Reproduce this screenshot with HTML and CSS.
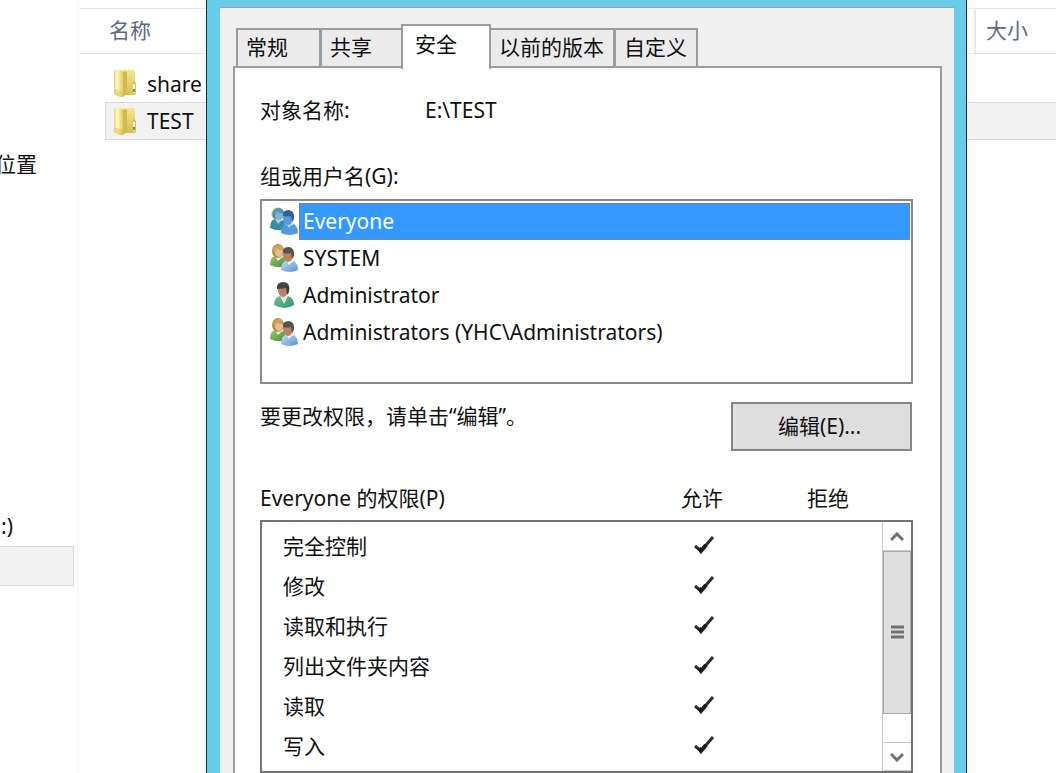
FILE: index.html
```html
<!DOCTYPE html>
<html lang="zh-CN">
<head>
<meta charset="utf-8">
<title>TEST 属性</title>
<link rel="stylesheet" href="styles.css">
</head>
<body>
<svg class="defs" aria-hidden="true">
  <defs>
    <linearGradient id="gold" x1="0" x2="1"><stop offset="0" stop-color="#e8d77a"/><stop offset=".35" stop-color="#fff9c4"/><stop offset="1" stop-color="#e3cd62"/></linearGradient>
    <linearGradient id="gold-back" x1="0" x2="0" y1="0" y2="1"><stop offset="0" stop-color="#f3e791"/><stop offset="1" stop-color="#d9bd48"/></linearGradient>
    <linearGradient id="green" x2="1" y2="1"><stop offset="0" stop-color="#9cc77c"/><stop offset="1" stop-color="#4c8a35"/></linearGradient>
    <linearGradient id="blue" x2="1" y2="1"><stop offset="0" stop-color="#c0dcf5"/><stop offset="1" stop-color="#5a92cc"/></linearGradient>
    <linearGradient id="teal" x2="1" y2="1"><stop offset="0" stop-color="#7cc0a0"/><stop offset="1" stop-color="#2f9468"/></linearGradient>
    <symbol id="folder" viewBox="0 0 24 29">
      <path d="M4 1h16q2 0 2 2v21q0 2-2 2H8z" fill="url(#gold-back)"/>
      <path d="M20 12q3 0 3 3v9q0 2-3 2z" fill="#dcc252"/>
      <path d="M20 15h2v9h-2z" fill="#f5f1dc"/><path d="M20 20h2v3h-2z" fill="#3fa69a"/>
      <path d="M8 5q3-4 6-2v20q-2 5-6 5z" fill="#d3b94f"/>
      <path d="M1 3q0-2 2-2h5q2 1 2 4v20q0 3-3 3l-5-2q-1-1-1-2z" fill="url(#gold)"/>
      <path d="M1 20l9 3v3q0 2-3 2l-5-2q-1-1-1-2z" fill="#d9bf50" opacity=".5"/>
    </symbol>
    <symbol id="group" viewBox="0 0 28 28">
      <path d="M0 21q0-8 5-9l5 2 4-1 2 9q-8 3-16-1z" fill="url(#green)"/>
      <path d="M5 12l3 5 4-4z" fill="#f3eee0"/>
      <ellipse cx="8" cy="7" rx="6" ry="7" fill="#b68d42"/><ellipse cx="9" cy="8" rx="4" ry="5" fill="#e8bb92"/><path d="M3 7q0-6 6-6 4 0 5 5-5 1-7-2 0 4-4 3z" fill="#cda35a"/>
      <path d="M11 26q0-8 5-9l4 2 4-2q4 3 4 9-8 4-17 0z" fill="url(#blue)"/>
      <path d="M16 16l3 5 4-5z" fill="#eef5fb"/>
      <ellipse cx="18" cy="11" rx="5" ry="7" fill="#b98260"/><path d="M13 9q-1-6 6-6 6 1 5 9l-2 3-1-6q-4 1-8 0z" fill="#55544e"/>
    </symbol>
    <symbol id="group-selected" viewBox="0 0 28 28">
      <path d="M0 21q0-8 5-9l5 2 4-1 2 9q-8 3-16-1z" fill="#368da2"/>
      <ellipse cx="8" cy="7" rx="6" ry="6" fill="#4b86a5" stroke="#8fcb55"/><ellipse cx="9" cy="8" rx="4" ry="5" fill="#7fb2dc"/><path d="M3 7q0-6 6-6 4 0 5 5-5 1-7-2 0 4-4 3z" fill="#5c93b0"/>
      <path d="M11 26q0-8 5-9l4 2 4-2q4 3 4 9-8 4-17 0z" fill="#529be2"/>
      <path d="M5 12l3 5 4-4zM16 16l3 5 4-5z" fill="#a4d4f6"/>
      <ellipse cx="18" cy="11" rx="5" ry="7" fill="#5b9ad6"/><path d="M13 9q-1-6 6-6 6 1 5 9l-2 3-1-6q-4 1-8 0z" fill="#2d6297"/>
    </symbol>
    <symbol id="user" viewBox="0 0 28 28">
      <path d="M4 24q0-8 6-9l4 2 4-2q6 2 6 9-9 6-20 0z" fill="url(#teal)"/>
      <path d="M10 15l4 8 4-8z" fill="#d9eee4"/>
      <ellipse cx="13" cy="9" rx="5" ry="7" fill="#b98466"/><path d="M7 8q-1-7 7-7 7 1 5 10l-2 3-1-7q-4 1-9 1z" fill="#45423d"/>
    </symbol>
    <symbol id="check" viewBox="0 0 22 20"><path d="M2 11l6 5L20 2" fill="none" stroke="#2b2b2b" stroke-width="3"/><path d="M6 13l2 3 5-6" fill="none" stroke="#1d1d1d" stroke-width="4"/></symbol>
  </defs>
</svg>

<div class="explorer">
  <nav class="sidebar">
    <a class="nav-place" href="#">位置</a>
    <a class="nav-drive" href="#">:)</a>
    <div class="nav-selected"></div>
  </nav>
  <main class="files">
    <div class="columns"><span class="col-name">名称</span><span class="col-size">大小</span></div>
    <div class="file"><svg class="folder"><use href="#folder"/></svg><span>share</span></div>
    <div class="file file-selected"><svg class="folder"><use href="#folder"/></svg><span>TEST</span></div>
  </main>
</div>

<section class="dialog" role="dialog" aria-label="TEST 属性">
  <div class="dialog-body">
    <div class="tabs" role="tablist">
      <button class="tab tab-general" role="tab">常规</button>
      <button class="tab tab-share" role="tab">共享</button>
      <button class="tab tab-active" role="tab" aria-selected="true">安全</button>
      <button class="tab tab-versions" role="tab">以前的版本</button>
      <button class="tab tab-custom" role="tab">自定义</button>
    </div>
    <div class="panel" role="tabpanel">
      <div class="object"><span class="object-label">对象名称:</span><span>E:\TEST</span></div>
      <div class="group-label" id="group-label">组或用户名(G):</div>
      <ul class="principals" role="listbox" aria-labelledby="group-label">
        <li class="principal selected" role="option" aria-selected="true"><svg class="person"><use href="#group-selected"/></svg><span class="principal-name">Everyone</span></li>
        <li class="principal" role="option"><svg class="person"><use href="#group"/></svg><span class="principal-name">SYSTEM</span></li>
        <li class="principal" role="option"><svg class="person"><use href="#user"/></svg><span class="principal-name">Administrator</span></li>
        <li class="principal" role="option"><svg class="person"><use href="#group"/></svg><span class="principal-name">Administrators (YHC\Administrators)</span></li>
      </ul>
      <div class="edit-row"><span>要更改权限，请单击“编辑”。</span><button class="edit">编辑(E)...</button></div>
      <div class="perm-head"><span class="perm-title" id="perm-title">Everyone 的权限(P)</span><span class="perm-col">允许</span><span class="perm-col">拒绝</span></div>
      <div class="perm-box">
        <table class="perms" aria-labelledby="perm-title">
          <tbody>
            <tr><th scope="row">完全控制</th><td><svg class="check" role="img" aria-label="允许"><use href="#check"/></svg></td><td></td></tr>
            <tr><th scope="row">修改</th><td><svg class="check" role="img" aria-label="允许"><use href="#check"/></svg></td><td></td></tr>
            <tr><th scope="row">读取和执行</th><td><svg class="check" role="img" aria-label="允许"><use href="#check"/></svg></td><td></td></tr>
            <tr><th scope="row">列出文件夹内容</th><td><svg class="check" role="img" aria-label="允许"><use href="#check"/></svg></td><td></td></tr>
            <tr><th scope="row">读取</th><td><svg class="check" role="img" aria-label="允许"><use href="#check"/></svg></td><td></td></tr>
            <tr><th scope="row">写入</th><td><svg class="check" role="img" aria-label="允许"><use href="#check"/></svg></td><td></td></tr>
          </tbody>
        </table>
        <div class="scrollbar">
          <button class="arrow" aria-label="向上滚动"><svg class="chevron" viewBox="0 0 14 10"><path d="M1 8l6-6 6 6"/></svg></button>
          <div class="thumb"><svg class="grip" viewBox="0 0 13 15"><path d="M0 2h13M0 7h13M0 12h13"/></svg></div>
          <div class="track"></div>
          <button class="arrow arrow-down" aria-label="向下滚动"><svg class="chevron" viewBox="0 0 14 10"><path d="M1 2l6 6 6-6"/></svg></button>
        </div>
      </div>
    </div>
  </div>
</section>
</body>
</html>
```
FILE: styles.css
```css
* { box-sizing: border-box; }

body {
  margin: 0;
  height: 100vh;
  position: relative;
  overflow: hidden;
  background: #fff;
  color: #111;
  font: 21px/28px "Noto Sans", "Noto Sans CJK SC", sans-serif;
}

button { font: inherit; color: inherit; border-radius: 0; }
a { color: inherit; text-decoration: none; }
.defs { position: absolute; width: 0; height: 0; }

.explorer { display: flex; min-height: 100vh; }

.sidebar {
  width: 78px;
  flex: none;
  display: flex;
  flex-direction: column;
  padding-top: 150px;
  border-right: 1px solid #f6f6f6;
}
.nav-place { margin-left: -5px; }
.nav-drive { margin-top: 334px; margin-left: 1px; }
.nav-selected {
  height: 40px;
  margin: 6px 3px 0 0;
  background: #f2f2f2;
  border: 1px solid #dcdcdc;
  border-left: 0;
}

.files { flex: 1; padding: 8px 0 0 2px; }
.columns {
  display: flex;
  justify-content: space-between;
  height: 46px;
  margin-bottom: 11px;
  border: solid #e4e4e4;
  border-width: 1px 0;
  color: #5c6b80;
  line-height: 42px;
}
.col-name { padding-left: 29px; }
.col-size { width: 82px; padding-left: 10px; border-left: 2px solid #e8e8e8; }

.file {
  display: flex;
  align-items: center;
  gap: 10px;
  height: 37px;
  margin-left: 25px;
  padding-left: 8px;
}
.file-selected { height: 38px; padding-left: 7px; background: #f2f2f2; border: 1px solid #dadada; border-right: 0; }
.folder { width: 24px; height: 29px; }

.dialog {
  position: absolute;
  top: 0;
  bottom: 0;
  left: 206px;
  right: 89px;
  overflow: hidden;
  padding: 7px 12px 0 13px;
  background: #67cbe9;
  border: solid #18323c;
  border-width: 0 1px;
}
.dialog-body { padding: 16px 12px 0 13px; min-height: 100%; background: #f0f0f0; border-top: 1px solid #8fa5ad; }

.tabs { display: flex; align-items: flex-end; height: 45px; padding-left: 3px; margin-bottom: -3px; position: relative; }
.tab {
  height: 40px;
  margin-bottom: 1px;
  padding: 0 0 2px 8px;
  text-align: left;
  background: #ebebeb;
  border: 2px solid #999da0;
  border-right-width: 1px;
}
.tab-general { width: 84px; }
.tab-share { width: 81px; border-right: 0; }
.tab-active { width: 90px; height: 45px; margin: 0; padding: 0 0 7px 12px; background: #fff; border-bottom: 0; border-right-width: 2px; }
.tab-versions { width: 123px; border-left: 0; }
.tab-custom { width: 84px; border-right-width: 2px; }

.panel { padding: 28px 27px 20px 25px; background: #fff; border: 2px solid #999da0; border-bottom: 0; }
.object { display: flex; }
.object-label { width: 165px; }
.group-label { margin-top: 38px; }

.principals { list-style: none; min-height: 185px; margin: 9px 0 0; padding: 2px 1px 2px 8px; border: 2px solid #858b8e; }
.principal { display: flex; align-items: center; height: 37px; }
.person { width: 28px; height: 28px; flex: none; margin-bottom: 2px; }
.principal-name { flex: 1; margin-left: 1px; padding-left: 4px; line-height: 37px; }
.selected .principal-name { color: #fff; background: #3399ff; outline: 1px dotted #a0794a; outline-offset: -1px; }

.edit-row { display: flex; justify-content: space-between; margin-top: 18px; }
.edit { width: 181px; height: 49px; margin-right: 1px; padding: 0 4px 2px 0; background: #dedede; border: 2px solid #858585; }

.perm-head { display: flex; margin-top: 33px; padding-right: 22px; }
.perm-title { flex: 1; }
.perm-col { width: 126px; text-align: center; }
.perm-box { display: flex; height: 253px; margin-top: 8px; border: 2px solid #737373; }
.perms { flex: 1; align-self: flex-start; margin-top: 4px; border-collapse: collapse; table-layout: fixed; }
.perms th { padding: 0 0 0 21px; text-align: left; font-weight: normal; }
.perms td { width: 119px; padding: 0; text-align: center; }
.perms tr { height: 40px; }
.check { width: 22px; height: 20px; display: block; margin: 0 auto 2px; }

.scrollbar { width: 29px; display: flex; flex-direction: column; border-left: 1px solid #c8c8c8; }
.arrow { display: flex; align-items: center; justify-content: center; height: 29px; padding: 2px 0 0; background: #fff; border: 0; border-bottom: 1px solid #ccc; }
.arrow-down { padding: 0; border-top: 1px solid #c8c8c8; }
.thumb { display: flex; align-items: center; justify-content: center; height: 163px; background: #dedede; border: 1px solid #aaa; }
.track { flex: 1; background: #fff; }
.chevron { width: 14px; height: 10px; fill: none; stroke: #707070; stroke-width: 3; }
.grip { width: 13px; height: 15px; stroke: #707070; stroke-width: 3; }
```
